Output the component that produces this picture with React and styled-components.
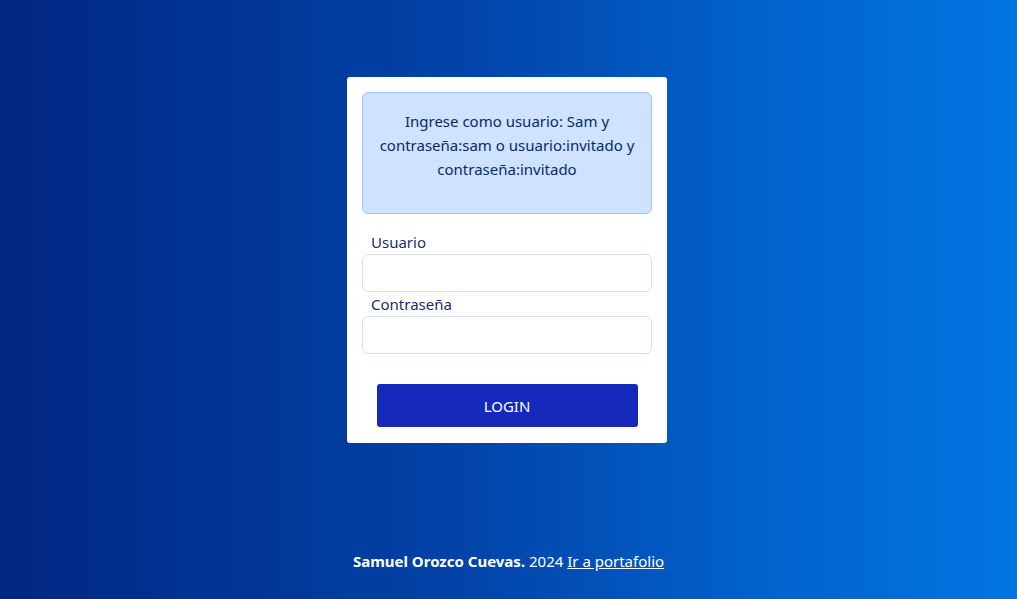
import React from 'react';
import styled, { createGlobalStyle } from 'styled-components';

const GlobalStyle = createGlobalStyle`
  html, body {
    margin: 0;
    padding: 0;
    height: 100%;
  }
  body {
    font-family: "Noto Sans", "Open Sans", sans-serif;
  }
  #root {
    height: 100%;
  }
`;

const Page = styled.div`
  height: 599px;
  display: flex;
  flex-direction: column;
  align-items: center;
  background: linear-gradient(90deg, #012683 0%, #0243a8 45%, #0262cc 75%, #0275e1 100%);
  overflow: hidden;
`;

const Card = styled.form`
  margin-top: 77px;
  margin-right: 3px;
  width: 320px;
  box-sizing: border-box;
  padding: 15px 15px 16px;
  background: #ffffff;
  border-radius: 3px;
  display: flex;
  flex-direction: column;
`;

const Alert = styled.div`
  box-sizing: border-box;
  height: 122px;
  padding: 16px 12px;
  background: #cfe2ff;
  border: 1px solid #9ec5fe;
  border-radius: 6px;
  color: #052c65;
  font-size: 15px;
  line-height: 24px;
  text-align: center;
`;

const Field = styled.div`
  display: flex;
  flex-direction: column;
  margin-top: ${(p) => (p.first ? '16px' : '0')};
`;

const Label = styled.label`
  padding-left: 9px;
  font-size: 15px;
  line-height: 24px;
  color: #1c2c6b;
`;

const Input = styled.input`
  box-sizing: border-box;
  height: 38px;
  border: 1px solid #d3e2fb;
  border-radius: 6px;
  outline: none;
  font: inherit;
  padding: 0 12px;
`;

const Button = styled.button`
  align-self: center;
  margin-top: 30px;
  width: 261px;
  height: 43px;
  border: none;
  border-radius: 3px;
  background: #1529bb;
  color: #ffffff;
  font-family: inherit;
  font-size: 15px;
  cursor: pointer;
`;

const Footer = styled.footer`
  margin-top: auto;
  margin-bottom: 26px;
  color: #ffffff;
  font-size: 15px;
  line-height: 24px;
  a {
    color: #ffffff;
    text-decoration: underline;
  }
`;

export default function App() {
  return (
    <>
      <GlobalStyle />
      <Page>
        <Card onSubmit={(e) => e.preventDefault()}>
          <Alert>
            Ingrese como usuario: Sam y contraseña:sam o usuario:invitado y contraseña:invitado
          </Alert>
          <Field first>
            <Label htmlFor="user">Usuario</Label>
            <Input id="user" type="text" />
          </Field>
          <Field>
            <Label htmlFor="pass">Contraseña</Label>
            <Input id="pass" type="password" />
          </Field>
          <Button type="submit">LOGIN</Button>
        </Card>
        <Footer>
          <b>Samuel Orozco Cuevas.</b> 2024 <a href="#">Ir a portafolio</a>
        </Footer>
      </Page>
    </>
  );
}
